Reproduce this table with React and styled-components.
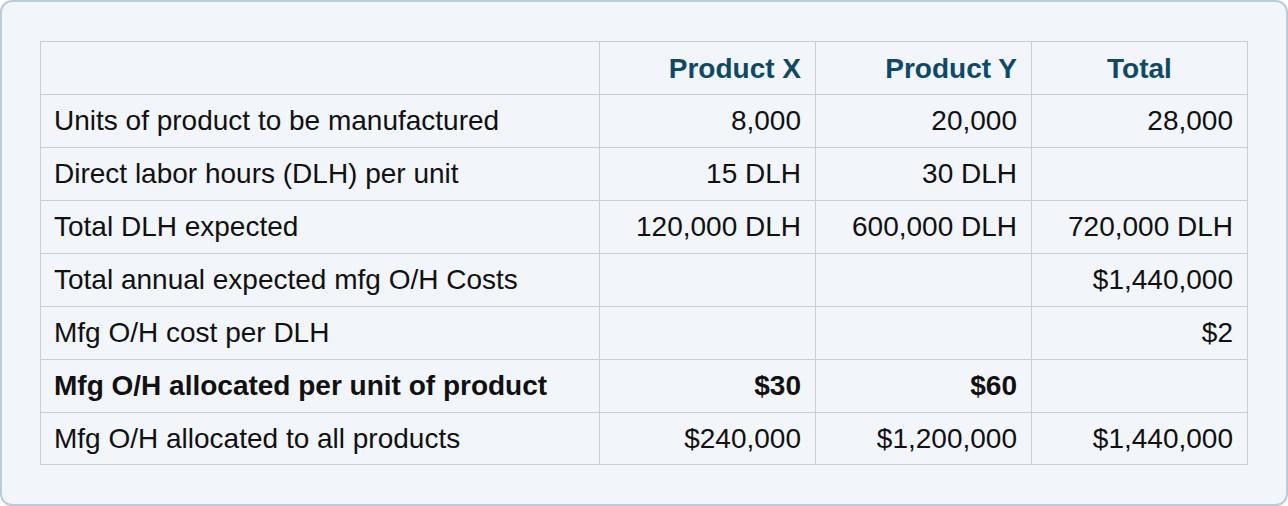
import React from "react";
import styled, { createGlobalStyle } from "styled-components";

const Global = createGlobalStyle`
  html, body { margin: 0; padding: 0; background: #ffffff; }
  body { font-family: "Liberation Sans", Arial, sans-serif; }
`;

const Frame = styled.div`
  box-sizing: border-box;
  width: 1288px;
  height: 506px;
  background: #f2f5fa;
  border: 2px solid #bccbd8;
  border-radius: 12px;
  padding: 39px 40px 0 38px;
`;

const Table = styled.table`
  border-collapse: collapse;
  width: 1207px;
  table-layout: fixed;
  font-size: 28px;
  color: #111;
`;

const Col = styled.col`
  width: ${(p) => p.$w}px;
`;

const Row = styled.tr`
  height: ${(p) => (p.$last ? 52 : 53)}px;
`;

const Head = styled.th`
  border: 1px solid #c9ced5;
  padding: 2px 14px 0;
  font-weight: bold;
  color: #0d4a68;
  text-align: ${(p) => p.$align || "right"};
`;

const Cell = styled.td`
  border: 1px solid #c9ced5;
  padding: 0 14px 0 13px;
  text-align: ${(p) => (p.$label ? "left" : "right")};
  font-weight: ${(p) => (p.$bold ? "bold" : "normal")};
  white-space: nowrap;
`;

const rows = [
  ["Units of product to be manufactured", "8,000", "20,000", "28,000"],
  ["Direct labor hours (DLH) per unit", "15 DLH", "30 DLH", ""],
  ["Total DLH expected", "120,000 DLH", "600,000 DLH", "720,000 DLH"],
  ["Total annual expected mfg O/H Costs", "", "", "$1,440,000"],
  ["Mfg O/H cost per DLH", "", "", "$2"],
  ["Mfg O/H allocated per unit of product", "$30", "$60", "", true],
  ["Mfg O/H allocated to all products", "$240,000", "$1,200,000", "$1,440,000"],
];

export default function App() {
  return (
    <>
      <Global />
      <Frame>
        <Table>
          <colgroup>
            <Col $w={559} />
            <Col $w={216} />
            <Col $w={216} />
            <Col $w={216} />
          </colgroup>
          <thead>
            <Row>
              <Head $align="left"></Head>
              <Head>Product X</Head>
              <Head>Product Y</Head>
              <Head $align="center">Total</Head>
            </Row>
          </thead>
          <tbody>
            {rows.map((r, i) => (
              <Row key={i} $last={i === rows.length - 1}>
                <Cell $label $bold={r[4]}>{r[0]}</Cell>
                <Cell $bold={r[4]}>{r[1]}</Cell>
                <Cell $bold={r[4]}>{r[2]}</Cell>
                <Cell $bold={r[4]}>{r[3]}</Cell>
              </Row>
            ))}
          </tbody>
        </Table>
      </Frame>
    </>
  );
}
